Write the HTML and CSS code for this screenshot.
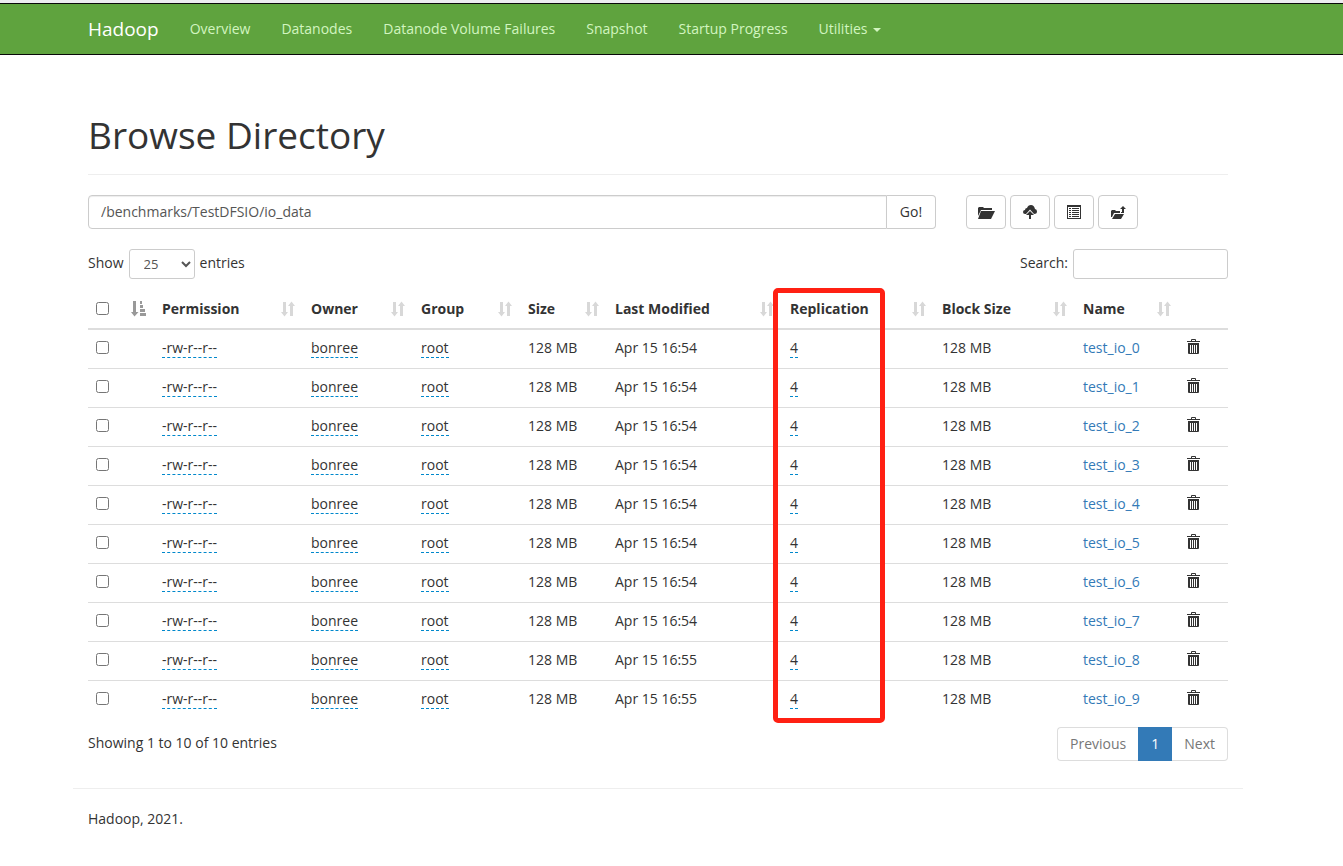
FILE: index.html
```
<!DOCTYPE html>
<html lang="en">
<head>
    <meta charset="UTF-8">
    <title>Browsing HDFS</title>
    <link rel="stylesheet" href="styles.css">
</head>
<body>

<!-- Shared icons -->
<svg class="icon-defs" aria-hidden="true">
    <symbol id="icon-sort" viewBox="0 0 14 16">
        <path d="M2 1h3v10h2l-3.500 4.500L0 11h2zM9 15h3V5h2l-3.500-4.500L7 5h2z"/>
    </symbol>
    <symbol id="icon-sort-active" viewBox="0 0 15 16">
        <path d="M2 0h3v11h2.500l-4 4.500L0 11h2zM9 0h2v3H9zM9 4h3v3H9zM9 8h5v3H9zM9 12h6v3H9z"/>
    </symbol>
    <symbol id="icon-trash" viewBox="0 0 13 15">
        <path fill-rule="evenodd" d="M4 2V1q0-1 1-1h3q1 0 1 1v1h4v1H0V2zM5 1v1h3V1zM1 4h11v10q0 1-1 1H2q-1 0-1-1zM3 6v8h1V6zM5 6v8h1V6zM7 6v8h1V6zM9 6v8h1V6z"/>
    </symbol>
</svg>

<nav class="navbar">
    <div class="container navbar-inner">
        <a class="navbar-brand" href="#">Hadoop</a>
        <a href="#">Overview</a>
        <a href="#">Datanodes</a>
        <a href="#">Datanode Volume Failures</a>
        <a href="#">Snapshot</a>
        <a href="#">Startup Progress</a>
        <a href="#">Utilities <span class="caret"></span></a>
    </div>
</nav>

<main class="container">
    <h1>Browse Directory</h1>

    <div class="path-row">
        <form class="path-form">
            <input type="text" id="directory" aria-label="Directory" value="/benchmarks/TestDFSIO/io_data">
            <button type="button">Go!</button>
        </form>
        <div class="tools">
            <button type="button" aria-label="Create directory">
                <svg width="18" height="13" viewBox="0 0 18 13"><path d="M1 10V2l1-1h4l1 1h8v2H4L1 10zM4 5h14l-4 8H1z"/></svg>
            </button>
            <button type="button" aria-label="Upload files">
                <svg width="16" height="14" viewBox="0 0 16 14"><path d="M3 9Q1 9 1 7 1 5 3 5 3 3 5 3 6 0 9 0q3 0 4 4 2 0 2 2.500Q15 9 12 9L8 4.500 4 9zM8 6l4 4H9v4H7v-4H4z"/></svg>
            </button>
            <button type="button" aria-label="Cut and paste">
                <svg width="14" height="14" viewBox="0 0 14 14"><path fill-rule="evenodd" d="M0 0h14v14H0zM1 2v11h12V2zM2 3h2v1H2zM5 3h7v1H5zM2 5h2v1H2zM5 5h7v1H5zM2 7h2v1H2zM5 7h7v1H5zM2 9h2v1H2zM5 9h7v1H5zM2 11h2v1H2zM5 11h7v1H5z"/></svg>
            </button>
            <button type="button" aria-label="Parent directory">
                <svg width="15" height="13" viewBox="0 0 15 13"><path d="M0 11V5l1-1h3l1 1h4v2H3L1 11zM4 8h9l-3 5H1zM10 6h1V3H9l3-3 3 3h-2v4h-3z"/></svg>
            </button>
        </div>
    </div>

    <div class="table-controls">
        <label>Show
            <select>
                <option>10</option>
                <option selected>25</option>
                <option>50</option>
                <option>100</option>
            </select>
            entries</label>
        <label>Search: <input type="search"></label>
    </div>

    <div class="table-wrap">
        <table>
            <colgroup>
                <col class="col-check"><col class="col-permission"><col class="col-owner">
                <col class="col-group"><col class="col-size"><col class="col-modified">
                <col class="col-replication"><col class="col-block"><col class="col-name"><col>
            </colgroup>
            <thead>
                <tr>
                    <th><div class="head"><input type="checkbox" aria-label="Select all"><svg class="sort active"><use href="#icon-sort-active"/></svg></div></th>
                    <th><div class="head">Permission<svg class="sort"><use href="#icon-sort"/></svg></div></th>
                    <th><div class="head">Owner<svg class="sort"><use href="#icon-sort"/></svg></div></th>
                    <th><div class="head">Group<svg class="sort"><use href="#icon-sort"/></svg></div></th>
                    <th><div class="head">Size<svg class="sort"><use href="#icon-sort"/></svg></div></th>
                    <th><div class="head">Last Modified<svg class="sort"><use href="#icon-sort"/></svg></div></th>
                    <th><div class="head">Replication<svg class="sort"><use href="#icon-sort"/></svg></div></th>
                    <th><div class="head">Block Size<svg class="sort"><use href="#icon-sort"/></svg></div></th>
                    <th><div class="head">Name<svg class="sort"><use href="#icon-sort"/></svg></div></th>
                    <th></th>
                </tr>
            </thead>
            <tbody id="files"></tbody>
        </table>
        <div class="highlight"></div>
    </div>

    <div class="table-footer">
        <div>Showing 1 to 10 of 10 entries</div>
        <div class="pagination">
            <button type="button">Previous</button>
            <button type="button" class="current">1</button>
            <button type="button">Next</button>
        </div>
    </div>

    <footer>Hadoop, 2021.</footer>
</main>

<script>
    // Modification time of each test_io file
    const times = ["16:54", "16:54", "16:54", "16:54", "16:54", "16:54", "16:54", "16:54", "16:55", "16:55"];

    document.getElementById("files").innerHTML = times.map((time, i) => `
        <tr>
            <td><input type="checkbox" aria-label="Select test_io_${i}"></td>
            <td><span class="editable">-rw-r--r--</span></td>
            <td><span class="editable">bonree</span></td>
            <td><span class="editable">root</span></td>
            <td>128 MB</td>
            <td>Apr 15 ${time}</td>
            <td><span class="editable">4</span></td>
            <td>128 MB</td>
            <td><a href="#">test_io_${i}</a></td>
            <td><button type="button" class="trash" aria-label="Delete test_io_${i}"><svg><use href="#icon-trash"/></svg></button></td>
        </tr>`).join("");
</script>

</body>
</html>
```
FILE: styles.css
```
* {
    box-sizing: border-box;
}

body {
    margin: 0;
    border-top: 3px solid #ececef;
    background: #fff;
    color: #333;
    font-family: "Segoe UI", "Open Sans", sans-serif;
    font-size: 14px;
    line-height: 22px;
}

a {
    color: #337ab7;
    text-decoration: none;
}

button, input, select {
    font: inherit;
}

svg {
    display: block;
    fill: currentColor;
}

.icon-defs {
    position: absolute;
    width: 0;
    height: 0;
}

.container {
    max-width: 1170px;
    margin-left: max(0px, calc((100% - 1170px - 27px) / 2));
    padding: 0 15px;
}

.navbar {
    height: 52px;
    background: #5fa33e;
    border: solid #080808;
    border-width: 1px 0;
}

.navbar-inner {
    display: flex;
    align-items: center;
    gap: 31px;
    height: 50px;
    white-space: nowrap;
}

.navbar a {
    color: #d2f5c0;
}

.navbar .navbar-brand {
    color: #fff;
    font-size: 19px;
}

.caret {
    display: inline-block;
    margin-left: 2px;
    vertical-align: middle;
    border: 4px solid transparent;
    border-top-color: currentColor;
    border-bottom: 0;
}

h1 {
    margin: 58px 0 20px;
    padding-bottom: 17px;
    border-bottom: 1px solid #eee;
    font-size: 37px;
    font-weight: 400;
    line-height: 44px;
}

.path-row {
    display: flex;
    gap: 30px;
}

.path-form {
    display: flex;
    flex: 0 1 848px;
}

.path-form input {
    flex: 1;
    min-width: 0;
    height: 34px;
    padding: 5px 12px 7px;
    border: 1px solid #ccc;
    border-radius: 4px 0 0 4px;
    box-shadow: inset 0 1px 1px rgba(0, 0, 0, 0.075);
    color: #555;
}

.path-form button, .tools button {
    height: 34px;
    padding: 0;
    border: 1px solid #ccc;
    background: #fff;
    color: #333;
}

.path-form button {
    width: 49px;
    border-left: 0;
    border-radius: 0 4px 4px 0;
}

.tools {
    display: flex;
    gap: 4px;
}

.tools button {
    display: flex;
    align-items: center;
    justify-content: center;
    width: 40px;
    border-radius: 4px;
}

.table-controls {
    display: flex;
    justify-content: space-between;
    margin: 20px 0 11px;
}

.table-controls label {
    display: flex;
    gap: 5px;
    line-height: 28px;
}

.table-controls select, .table-controls input {
    height: 30px;
    border: 1px solid #ccc;
    border-radius: 3px;
    background: #fff;
    color: #555;
}

.table-controls select {
    width: 66px;
    padding: 0 10px;
    font-size: 13px;
}

.table-controls input {
    width: 155px;
    padding: 5px 10px;
}

.table-wrap {
    position: relative;
}

table {
    width: 100%;
    table-layout: fixed;
    border-collapse: collapse;
}

.col-check { width: 66px; }
.col-permission { width: 149px; }
.col-owner { width: 110px; }
.col-group { width: 107px; }
.col-size { width: 87px; }
.col-modified { width: 175px; }
.col-replication { width: 152px; }
.col-block { width: 141px; }
.col-name { width: 104px; }

th, td {
    height: 39px;
    padding: 0 8px;
    border-top: 1px solid #ddd;
    text-align: left;
    white-space: nowrap;
}

td {
    padding-bottom: 2px;
}

th {
    padding-bottom: 1px;
    border-top: 0;
    border-bottom: 2px solid #ddd;
    font-weight: 700;
}

.head {
    display: flex;
    align-items: center;
    justify-content: space-between;
}

.sort {
    width: 14px;
    height: 16px;
    color: #d8d8d8;
}

.sort.active {
    width: 15px;
    color: #999;
}

input[type="checkbox"] {
    display: block;
    width: 13px;
    height: 13px;
    margin: 0;
}

.editable {
    border-bottom: 1px dashed #08c;
}

.trash {
    display: block;
    padding: 0 0 2px;
    border: 0;
    background: none;
    color: #333;
}

.trash svg {
    width: 13px;
    height: 15px;
}

/* Frame around the Replication column */
.highlight {
    position: absolute;
    top: -2px;
    bottom: -4px;
    left: 685px;
    width: 112px;
    border: 5px solid #ff2013;
    border-radius: 5px;
    pointer-events: none;
}

.table-footer {
    display: flex;
    justify-content: space-between;
    margin-top: 8px;
    line-height: 32px;
}

.pagination {
    display: flex;
}

.pagination button {
    height: 34px;
    padding: 0 12px;
    border: 1px solid #ddd;
    background: #fff;
    color: #777;
}

.pagination button:first-child {
    border-right: 0;
    border-radius: 4px 0 0 4px;
}

.pagination button:last-child {
    border-left: 0;
    border-radius: 0 4px 4px 0;
}

.pagination .current {
    border-color: #337ab7;
    background: #337ab7;
    color: #fff;
}

footer {
    margin: 27px -15px 0;
    padding: 19px 15px;
    border-top: 1px solid #eee;
}
```
